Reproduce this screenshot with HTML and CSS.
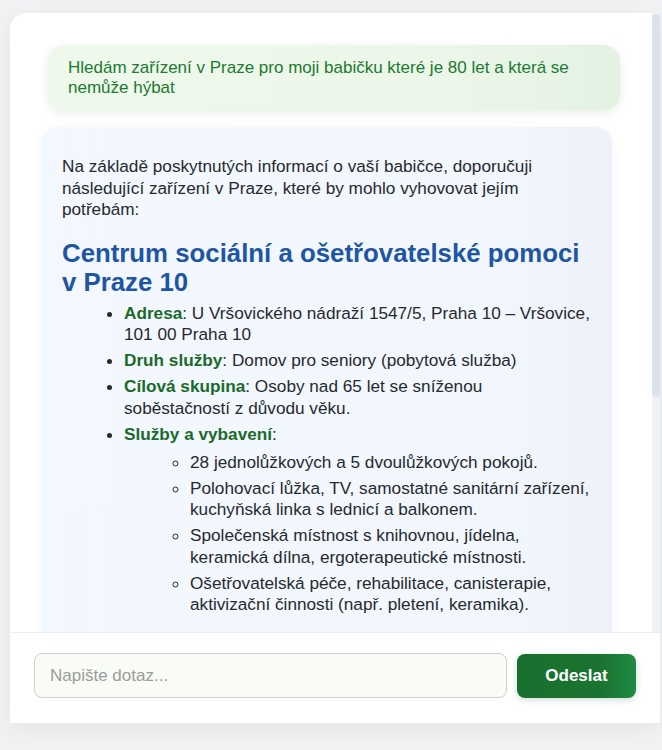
FILE: index.html
```html
<!DOCTYPE html>
<html lang="cs">
<head>
<meta charset="utf-8">
<title>Chat</title>
<link rel="stylesheet" href="styles.css">
</head>
<body>
<div class="app">
  <div class="viewport">
    <div class="messages">
      <div class="msg user">Hledám zařízení v Praze pro moji babičku které je 80 let a která se nemůže hýbat</div>
      <div class="msg bot">
        <p>Na základě poskytnutých informací o vaší babičce, doporučuji následující zařízení v Praze, které by mohlo vyhovovat jejím potřebám:</p>
        <h2>Centrum sociální a ošetřovatelské pomoci v Praze 10</h2>
        <ul>
          <li><strong>Adresa</strong>: U Vršovického nádraží 1547/5, Praha 10 – Vršovice, 101 00 Praha 10</li>
          <li><strong>Druh služby</strong>: Domov pro seniory (pobytová služba)</li>
          <li><strong>Cílová skupina</strong>: Osoby nad 65 let se sníženou soběstačností z důvodu věku.</li>
          <li><strong>Služby a vybavení</strong>:
            <ul>
              <li>28 jednolůžkových a 5 dvoulůžkových pokojů.</li>
              <li>Polohovací lůžka, TV, samostatné sanitární zařízení, kuchyňská linka s lednicí a balkonem.</li>
              <li>Společenská místnost s knihovnou, jídelna, keramická dílna, ergoterapeutické místnosti.</li>
              <li>Ošetřovatelská péče, rehabilitace, canisterapie, aktivizační činnosti (např. pletení, keramika).</li>
            </ul>
          </li>
        </ul>
        <p class="after">Doporučuji zařízení předem kontaktovat a domluvit si osobní návštěvu.</p>
      </div>
    </div>
    <div class="scrollbar"><div class="thumb"></div></div>
  </div>
  <div class="composer">
    <input class="input" type="text" placeholder="Napište dotaz...">
    <button class="send" type="button">Odeslat</button>
  </div>
</div>
</body>
</html>
```

FILE: styles.css
```css
html, body {
  margin: 0;
  padding: 0;
  background: #f1f2f3;
  font-family: "Liberation Sans", Arial, sans-serif;
}
body {
  padding: 13px 0 0 10px;
  height: 750px;
  box-sizing: border-box;
  overflow: hidden;
}
.app {
  width: 650px;
  height: 710px;
  background: #ffffff;
  border-radius: 16px 0 0 0;
  box-shadow: 0 6px 24px rgba(0, 0, 0, 0.06);
  display: flex;
  flex-direction: column;
  overflow: hidden;
}
.viewport {
  flex: 1;
  min-height: 0;
  display: flex;
}
.messages {
  flex: 1;
  min-width: 0;
  overflow: hidden;
  padding: 32px 32px 0 32px;
  display: flex;
  flex-direction: column;
  gap: 17px;
}
.scrollbar {
  width: 8px;
  flex-shrink: 0;
  background: #eff2f7;
  display: flex;
  flex-direction: column;
}
.thumb {
  height: 383px;
  margin-top: 1px;
  background: #dbe2ec;
  border-radius: 4px;
}
.msg {
  font-size: 17.2px;
  line-height: 21.5px;
  border-radius: 16px;
  box-sizing: border-box;
  flex-shrink: 0;
}
.user {
  align-self: flex-end;
  width: 572px;
  padding: 13px 20px 12px;
  color: #217a31;
  background: linear-gradient(90deg, #eef8eb 0%, #ecf6e9 70%, #e3f2e3 100%);
  box-shadow: 0 3px 10px rgba(60, 120, 60, 0.12);
  font-size: 17px;
  line-height: 20px;
}
.bot {
  align-self: flex-start;
  width: 570px;
  padding: 12px 20px 20px;
  color: #262a30;
  background: linear-gradient(90deg, #f3f7fe 0%, #f2f6fd 80%, #eef2f8 100%);
  box-shadow: 0 2px 10px rgba(80, 100, 140, 0.07);
}
.bot p {
  margin: 17px 0;
}
.bot p.after {
  margin-top: 24px;
}
.bot h2 {
  margin: 18px 0 6px;
  font-size: 25.8px;
  line-height: 29px;
  font-weight: 700;
  color: #1f56a4;
}
.bot ul {
  margin: 0;
  padding-left: 62px;
  list-style: disc;
}
.bot ul ul {
  margin: 6.5px 0 0;
  padding-left: 66px;
  list-style: circle;
}
.bot li {
  margin: 0 0 4.5px;
}
.bot strong {
  color: #1b6a2b;
  font-weight: 700;
}
.composer {
  flex-shrink: 0;
  border-top: 1px solid #eceff2;
  padding: 20px 24px 25px;
  display: flex;
  gap: 10px;
  align-items: center;
  background: #ffffff;
}
.input {
  flex: 1;
  height: 45px;
  box-sizing: border-box;
  border: 1px solid #c9d3c9;
  border-radius: 8px;
  background: #f8fbf6;
  padding: 0 15px;
  font-family: "Liberation Sans", Arial, sans-serif;
  font-size: 17px;
  color: #222;
  outline: none;
}
.input::placeholder {
  color: #9b9d9b;
}
.send {
  width: 119px;
  height: 44px;
  border: none;
  border-radius: 8px;
  background: linear-gradient(90deg, #19702e 0%, #1a7330 70%, #1f8b44 100%);
  color: #ffffff;
  font-family: "Liberation Sans", Arial, sans-serif;
  font-size: 17px;
  font-weight: 700;
  box-shadow: 0 2px 6px rgba(20, 90, 40, 0.2);
  cursor: pointer;
}
```
